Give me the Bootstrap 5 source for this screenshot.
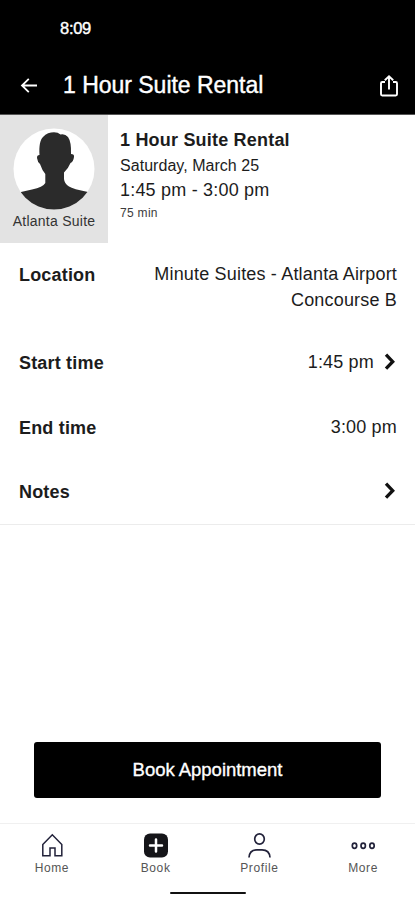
<!DOCTYPE html>
<html lang="en">
<head>
<meta charset="utf-8">
<meta name="viewport" content="width=device-width, initial-scale=1">
<title>1 Hour Suite Rental</title>
<link href="https://cdn.jsdelivr.net/npm/bootstrap@5.3.0/dist/css/bootstrap.min.css" rel="stylesheet">
<style>
body{font-family:"Liberation Sans",Arial,sans-serif;color:#1c1c1c;font-size:18px;line-height:26px;height:900px;overflow:hidden}
.app-head{height:115px;background:#000;color:#fff;border-bottom:1px solid #555}
.clock{height:57px;padding-left:60px;font-size:16.5px;letter-spacing:-.3px;-webkit-text-stroke:.4px #fff}
.clock span{line-height:57px}
.title-row{height:57px;padding:0 16px 0 20px}
.app-title{font-size:23px;line-height:57px;margin-left:25px;letter-spacing:-.02px;-webkit-text-stroke:.4px #fff}
.person{width:108px;height:128px;background:#e3e3e3;padding-top:13px;font-size:14px;letter-spacing:.25px;line-height:23px;color:#333}
.summary{padding:12px 0 0 12px}
.s-name{font-size:18px;letter-spacing:.2px;line-height:26px}
.s-date{font-size:16px;line-height:25px;letter-spacing:.04px}
.s-time{letter-spacing:.2px;line-height:24px}
.s-len{font-size:12px;letter-spacing:.3px;line-height:22px;color:#3c3c3c}
.details{height:282px;border-bottom:1px solid #ececec;padding:0 18px 0 19px}
.r-loc{padding-top:18px;height:88px}
.r-line{height:64.5px;padding-top:18px}
.lbl{letter-spacing:.18px;padding-top:1px}
.val{letter-spacing:.18px}
.book-btn{width:347px;height:56px;border-radius:3px;background:#000;color:#fff;font-size:18.5px;letter-spacing:-.02px;-webkit-text-stroke:.35px #fff}
.tabs{height:77px;margin-top:25px;border-top:1px solid #f0f0f0;font-size:12px;line-height:16px;letter-spacing:.6px;color:#555}
.tab-cell{padding-top:8px}
.tab-cell svg{height:28px}
.home-bar{width:76px;height:2px;background:#111;border-radius:1px}
</style>
<script src="https://cdn.jsdelivr.net/npm/bootstrap@5.3.0/dist/js/bootstrap.bundle.min.js" defer></script>
</head>
<body class="d-flex flex-column bg-white">
<header class="app-head flex-shrink-0">
  <div class="clock"><span>8:09</span></div>
  <div class="title-row d-flex align-items-center">
    <svg width="18" height="18" viewBox="0 0 18 18" fill="none" stroke="#fff" stroke-width="1.8"><path d="M17 8.500H2.500M8.800 1.800L2 8.500L8.800 15.200"/></svg>
    <h1 class="app-title mb-0 fw-normal">1 Hour Suite Rental</h1>
    <svg class="ms-auto" width="20" height="24" viewBox="0 0 20 24" fill="none" stroke="#fff" stroke-width="1.9"><path d="M6 8H3.200Q2 8 2 9.200V20.300Q2 21.500 3.200 21.500H16.800Q18 21.500 18 20.300V9.200Q18 8 16.800 8H14M10 15.500V2.500M5.800 6.200L10 2.200L14.200 6.200"/></svg>
  </div>
</header>
<section class="d-flex flex-shrink-0">
  <div class="person d-flex flex-column align-items-center">
    <svg width="82" height="82" viewBox="0 0 82 82"><defs><clipPath id="disc"><circle cx="41" cy="41" r="40.500"/></clipPath></defs><circle cx="41" cy="41" r="40.500" fill="#fff"/><path clip-path="url(#disc)" fill="#2b2b2b" d="M26.500 27C26 18 27 12 30 9C33 5.500 37 4.300 41 4.300Q45 4.300 47.500 6.500Q52 5.500 55 9Q58.500 14 58 26Q61.500 26 61 29Q60.300 34 57.500 35Q55 41 51 44.500V51Q51.500 56 56 58.500Q60 61 75 64V82H8V64L19 61.500Q30 59 32.300 55V46Q29 42 27 36Q24.500 34 24 30Q23.800 27 26.500 27Z"/></svg>
    <span>Atlanta Suite</span>
  </div>
  <div class="summary">
    <div class="s-name fw-bold">1 Hour Suite Rental</div>
    <div class="s-date">Saturday, March 25</div>
    <div class="s-time">1:45 pm - 3:00 pm</div>
    <div class="s-len">75 min</div>
  </div>
</section>
<section class="details flex-shrink-0">
  <div class="r-loc d-flex justify-content-between"><span class="lbl fw-bold">Location</span><span class="val text-end">Minute Suites - Atlanta Airport<br>Concourse B</span></div>
  <div class="r-line d-flex justify-content-between"><span class="lbl fw-bold">Start time</span><span class="d-flex"><span class="val">1:45 pm</span><svg class="ms-2" width="15" height="26" viewBox="0 0 15 26" fill="none" stroke="#111" stroke-width="3.300"><path d="M4 5.700L10.700 12.700L4 19.700"/></svg></span></div>
  <div class="r-line d-flex justify-content-between"><span class="lbl fw-bold">End time</span><span class="val">3:00 pm</span></div>
  <div class="r-line d-flex justify-content-between"><span class="lbl fw-bold">Notes</span><svg width="15" height="26" viewBox="0 0 15 26" fill="none" stroke="#111" stroke-width="3.300"><path d="M4 5.700L10.700 12.700L4 19.700"/></svg></div>
</section>
<main class="mt-auto d-flex justify-content-center flex-shrink-0">
  <button type="button" class="book-btn btn border-0 p-0">Book Appointment</button>
</main>
<nav class="tabs flex-shrink-0">
  <div class="row g-0 text-center">
    <div class="col tab-cell d-flex flex-column align-items-center"><svg width="28" viewBox="0 0 28 28" fill="none" stroke="#22223a" stroke-width="1.500"><path d="M4.800 12.500L14.300 2.800L23.800 12.500V23.800H17V16H12V23.800H4.800Z"/></svg><span>Home</span></div>
    <div class="col tab-cell d-flex flex-column align-items-center"><svg width="28" viewBox="0 0 28 28"><rect x="2" y="1.500" width="24" height="24" rx="6" fill="#151519"/><path d="M14 7.500V19.500M8 13.500H20" stroke="#fff" stroke-width="2.500" stroke-linecap="round"/></svg><span>Book</span></div>
    <div class="col tab-cell d-flex flex-column align-items-center"><svg width="28" viewBox="0 0 28 28" fill="none" stroke="#22223a" stroke-width="1.700"><ellipse cx="14.500" cy="7" rx="4.800" ry="5.200"/><path d="M4 25.500Q4.500 17.800 12 17.800H17Q24.500 17.800 25 25.500"/></svg><span>Profile</span></div>
    <div class="col tab-cell d-flex flex-column align-items-center"><svg width="28" viewBox="0 0 28 28" fill="none" stroke="#22223a" stroke-width="1.700"><ellipse cx="5.500" cy="13.700" rx="2.200" ry="2.600"/><ellipse cx="14.200" cy="13.700" rx="2.200" ry="2.600"/><ellipse cx="23" cy="13.700" rx="2.200" ry="2.600"/></svg><span>More</span></div>
  </div>
  <div class="home-bar mx-auto mt-3"></div>
</nav>
</body>
</html>
